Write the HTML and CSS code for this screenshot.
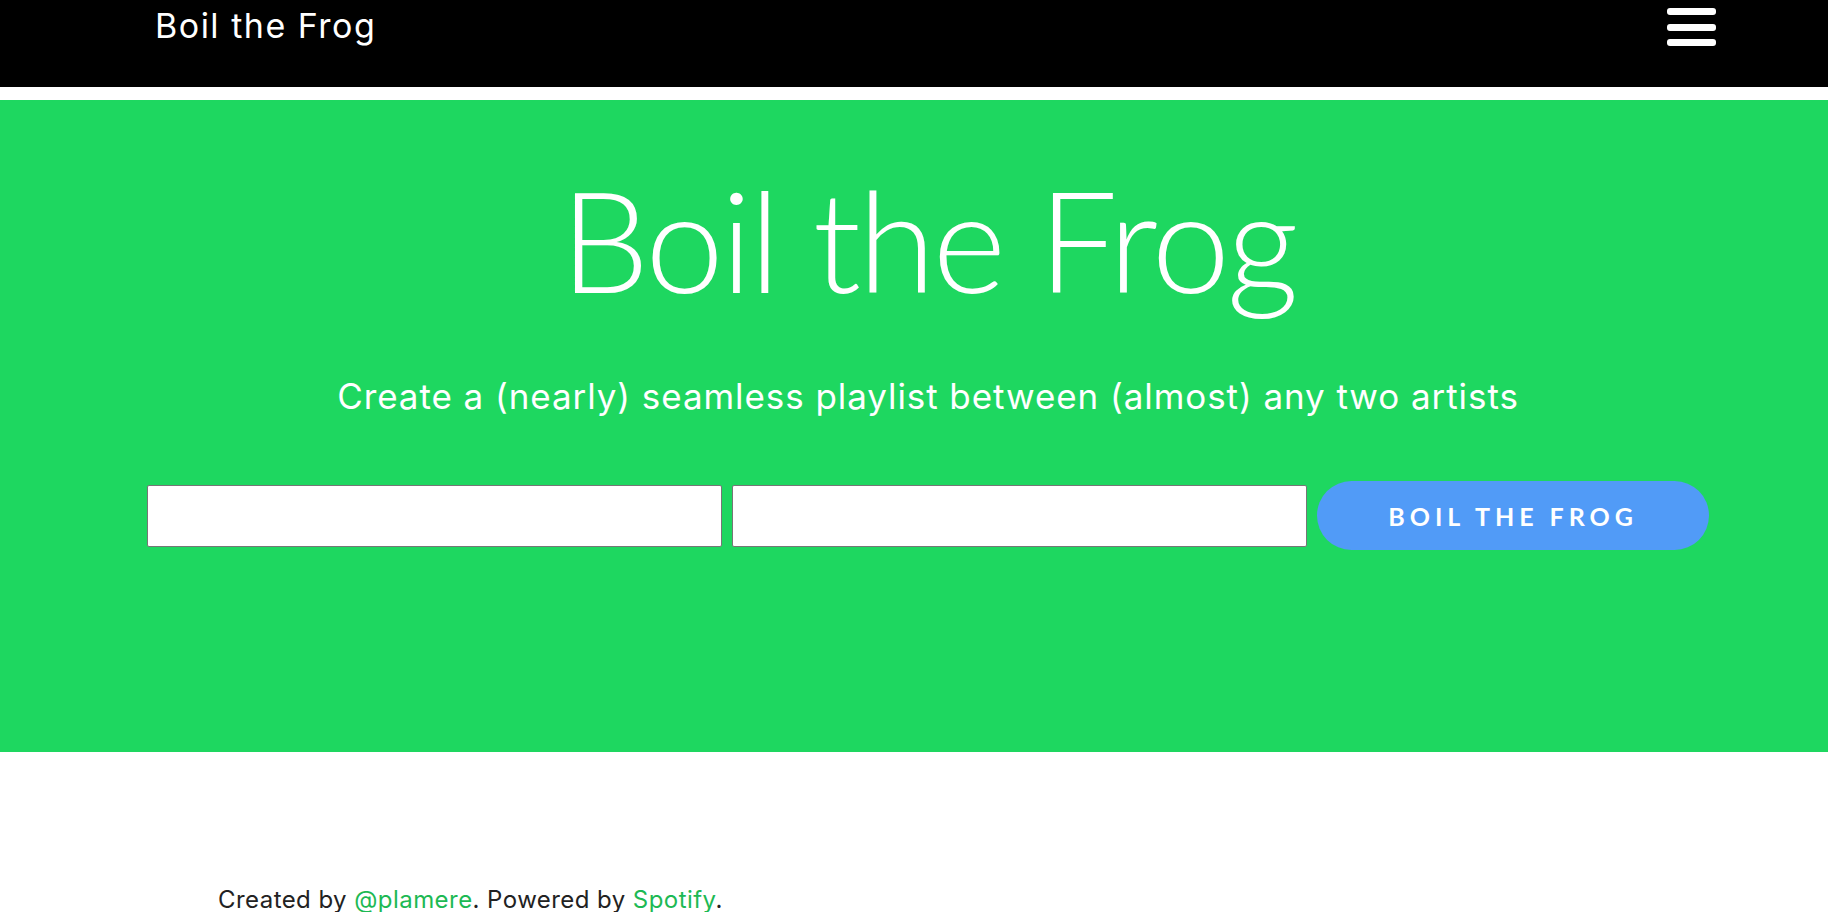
FILE: index.html
```html
<!DOCTYPE html>
<html lang="en">
<head>
<meta charset="utf-8">
<title>Boil the Frog</title>
<link rel="stylesheet" href="styles.css">
</head>
<body>
<header class="topbar">
  <div class="brand">Boil the Frog</div>
  <div class="burger" aria-label="menu">
    <span></span><span></span><span></span>
  </div>
</header>
<section class="hero">
  <div class="hero-inner">
    <h1 class="title">Boil the Frog</h1>
    <p class="subtitle">Create a (nearly) seamless playlist between (almost) any two artists</p>
    <div class="form-row">
      <input class="artist" type="text">
      <input class="artist" type="text">
      <button class="go">BOIL THE FROG</button>
    </div>
  </div>
</section>
<footer class="footer">
  Created by <a href="#">@plamere</a>. Powered by <a href="#">Spotify</a>.
</footer>
</body>
</html>
```
FILE: styles.css
```css
html, body {
  margin: 0;
  padding: 0;
  background: #fff;
  font-family: "Inter", "Lato", "Liberation Sans", sans-serif;
}
.topbar {
  background: #000;
  height: 87px;
  box-sizing: border-box;
  display: flex;
  justify-content: space-between;
  align-items: flex-start;
  padding: 8px 112px 0 155px;
}
.brand {
  color: #fff;
  font-size: 34px;
  line-height: 1;
  font-weight: 400;
  letter-spacing: 1.5px;
  padding-top: 0.6px;
}
.burger {
  width: 49px;
  display: flex;
  flex-direction: column;
  gap: 8.5px;
}
.burger span {
  display: block;
  height: 7px;
  background: #fff;
  border-radius: 3px;
}
.hero {
  margin-top: 13px;
  background: #1ed760;
  height: 652px;
  box-sizing: border-box;
  padding-top: 68px;
}
.hero-inner {
  margin: 0 119px 0 147px;
  text-align: center;
}
.title {
  margin: 0;
  color: #fff;
  font-family: "Lato", "Liberation Sans", sans-serif;
  font-size: 141px;
  line-height: 1;
  font-weight: 300;
  letter-spacing: -3px;
}
.subtitle {
  margin: 69.5px 0 0;
  color: #fff;
  font-size: 35px;
  line-height: 1;
  letter-spacing: 0.93px;
}
.form-row {
  margin-top: 67.5px;
  display: flex;
  align-items: center;
  gap: 10.5px;
}
.artist {
  width: 575px;
  height: 62px;
  box-sizing: border-box;
  border: 1px solid #767676;
  border-radius: 2px;
  background: #fff;
  margin: 0;
}
.go {
  width: 392px;
  height: 69px;
  border: none;
  border-radius: 35px;
  background: #519bf7;
  color: #fff;
  font-family: "Lato", "Liberation Sans", sans-serif;
  font-weight: 700;
  font-size: 25px;
  letter-spacing: 5px;
  padding: 0;
}
.footer {
  margin-top: 135.7px;
  padding-left: 218px;
  font-size: 24px;
  line-height: 1;
  letter-spacing: 0.44px;
  color: #222;
}
.footer a {
  color: #1db954;
  text-decoration: none;
}
```
